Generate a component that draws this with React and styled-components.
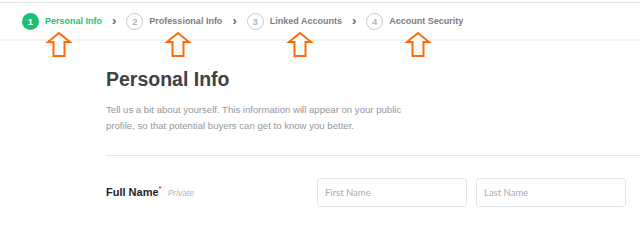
import React from "react";
import styled, { createGlobalStyle } from "styled-components";

const GlobalStyle = createGlobalStyle`
  body {
    margin: 0;
    background: #fff;
    font-family: "Liberation Sans", Arial, sans-serif;
  }
`;

const Page = styled.div`
  padding-top: 2px;
`;

const StepBar = styled.nav`
  display: flex;
  align-items: center;
  height: 36px;
  padding-left: 22px;
  border-top: 1px solid #e1e2e4;
  border-bottom: 2px solid #f4f4f5;
`;

const Step = styled.div`
  display: flex;
  align-items: center;
`;

const Circle = styled.span`
  display: flex;
  align-items: center;
  justify-content: center;
  box-sizing: border-box;
  width: 17px;
  height: 17px;
  border-radius: 50%;
  font-size: 9.5px;
  font-weight: 700;
  background: ${p => (p.active ? "#1dbf73" : "#fff")};
  color: ${p => (p.active ? "#fff" : "#b5b6ba")};
  border: ${p => (p.active ? "none" : "1.5px solid #c8c9cc")};
`;

const StepLabel = styled.span`
  position: relative;
  display: block;
  margin-left: 6px;
  line-height: 17px;
  font-size: 9px;
  font-weight: 700;
  color: ${p => (p.active ? "#1dbf73" : "#7a7d85")};
`;

const Chevron = styled.span`
  margin: 0 10px 1px;
  font-size: 13px;
  font-weight: 700;
  color: #62646a;
`;

const Pointer = styled.svg`
  position: absolute;
  top: 19px;
  left: ${p => p.offset}px;
  width: 24px;
  height: 26px;
  overflow: visible;
`;

const Main = styled.main`
  padding-left: 106px;
`;

const Title = styled.h1`
  margin: 26px 0 0;
  font-size: 19.5px;
  font-weight: 700;
  color: #404145;
  line-height: 24px;
`;

const Intro = styled.p`
  margin: 11px 0 0;
  width: 305px;
  font-size: 9.6px;
  line-height: 16px;
  color: #95979d;
`;

const Divider = styled.hr`
  margin: 21px 0 0;
  border: none;
  border-top: 1px solid #e4e5e7;
`;

const FormRow = styled.div`
  display: flex;
  align-items: center;
  margin-top: 22px;
`;

const FieldLabel = styled.div`
  width: 211px;
  margin-top: -3px;
  font-size: 11px;
  font-weight: 700;
  color: #222325;
`;

const Req = styled.sup`
  color: #f74040;
  font-size: 8px;
`;

const Private = styled.span`
  margin-left: 6px;
  font-size: 8.5px;
  font-weight: 400;
  font-style: italic;
  color: #b5b6ba;
`;

const Inputs = styled.div`
  display: flex;
  gap: 9px;
`;

const TextInput = styled.input`
  box-sizing: border-box;
  width: 150px;
  height: 29px;
  padding: 0 7px;
  border: 1px solid #e4e5e7;
  border-radius: 3px;
  font-family: "Lato", sans-serif;
  font-size: 9.5px;
  color: #404145;
  outline: none;
  &::placeholder {
    color: #a9abb0;
  }
`;

const steps = [
  { n: 1, label: "Personal Info", offset: 2 },
  { n: 2, label: "Professional Info", offset: 17 },
  { n: 3, label: "Linked Accounts", offset: 18 },
  { n: 4, label: "Account Security", offset: 17 },
];

function Arrow({ offset }) {
  return (
    <Pointer offset={offset} viewBox="0 0 24 26">
      <polygon
        points="12,1 23,10 17.5,10 17.5,24 6.5,24 6.5,10 1,10"
        fill="#fff"
        stroke="#ff6b0b"
        strokeWidth="2"
      />
    </Pointer>
  );
}

export default function App() {
  return (
    <Page>
      <GlobalStyle />
      <StepBar>
        {steps.map((s, i) => (
          <React.Fragment key={s.n}>
            <Step>
              <Circle active={s.n === 1}>{s.n}</Circle>
              <StepLabel active={s.n === 1}>
                {s.label}
                <Arrow offset={s.offset} />
              </StepLabel>
            </Step>
            {i < steps.length - 1 && <Chevron>&rsaquo;</Chevron>}
          </React.Fragment>
        ))}
      </StepBar>
      <Main>
        <Title>Personal Info</Title>
        <Intro>
          Tell us a bit about yourself. This information will appear on your
          public profile, so that potential buyers can get to know you better.
        </Intro>
        <Divider />
        <FormRow>
          <FieldLabel>
            Full Name<Req>*</Req>
            <Private>Private</Private>
          </FieldLabel>
          <Inputs>
            <TextInput placeholder="First Name" />
            <TextInput placeholder="Last Name" />
          </Inputs>
        </FormRow>
      </Main>
    </Page>
  );
}
